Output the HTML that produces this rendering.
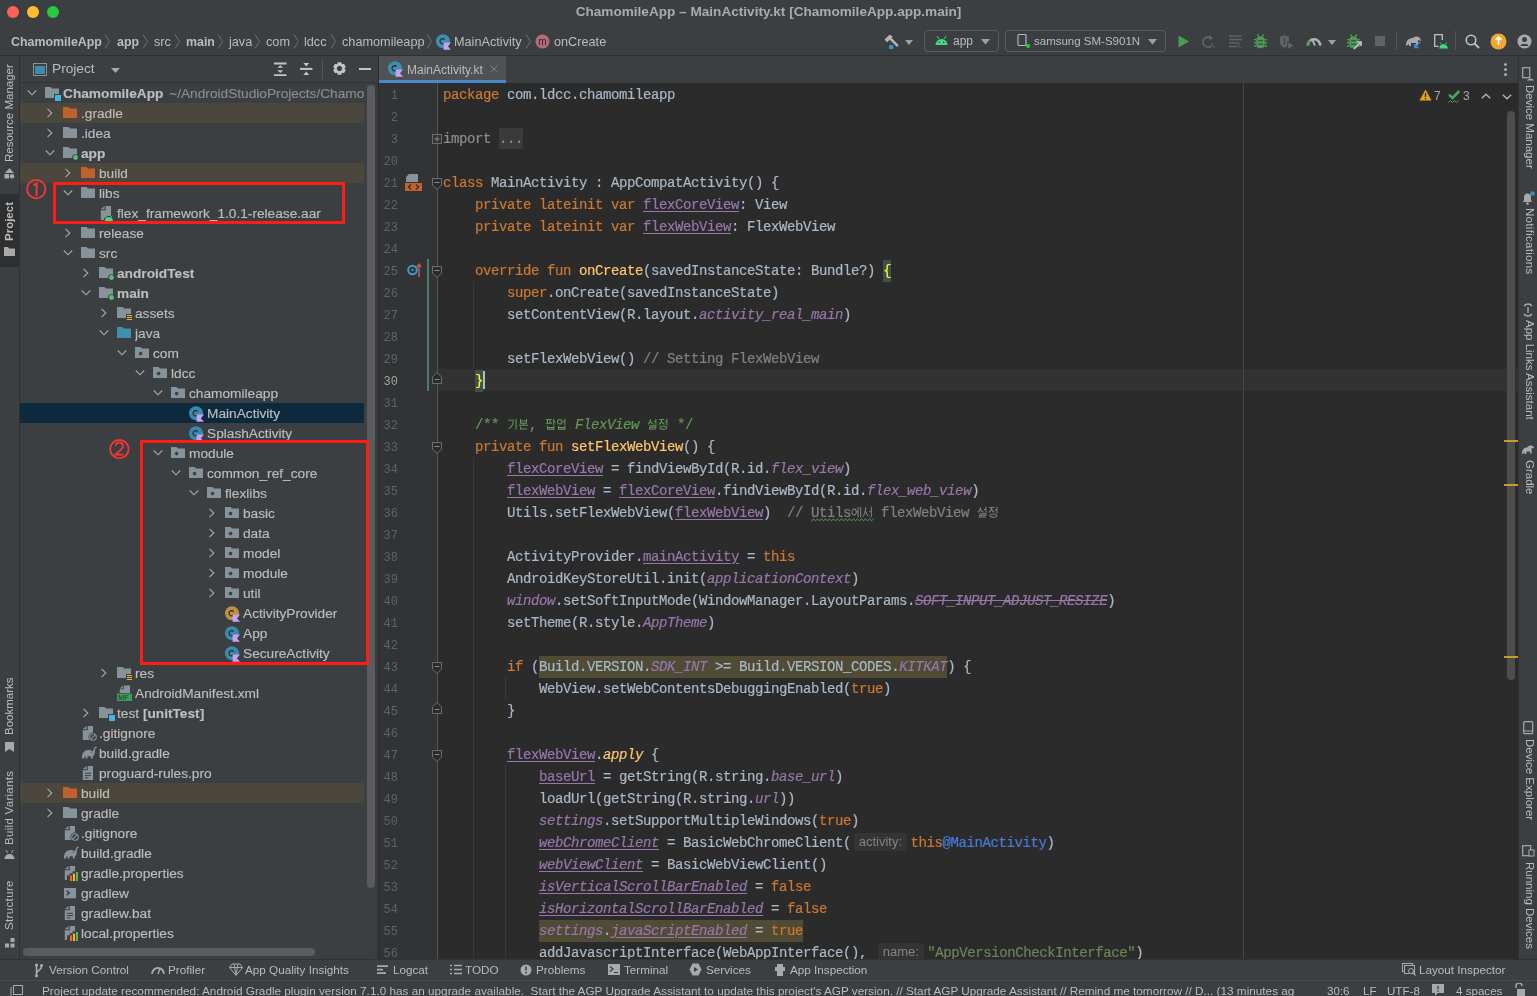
<!DOCTYPE html><html><head><meta charset='utf-8'><style>
*{margin:0;padding:0;box-sizing:border-box}
html,body{width:1537px;height:996px;overflow:hidden;background:#3c3f41;font-family:"Liberation Sans", sans-serif;}
.a{position:absolute}
.t{position:absolute;white-space:pre;line-height:1}
.ui{color:#bbbbbb;font-size:13px}
.row{position:absolute;left:20px;width:344px;height:20px}
.rt{position:absolute;top:3px;white-space:pre;overflow:hidden;max-width:301px;font-size:13.7px;color:#bdbdbd;line-height:17px;-webkit-text-stroke-width:0.15px}
.cl{position:absolute;left:443px;height:22px;white-space:pre;font-family:"Liberation Mono", monospace;font-size:14px;letter-spacing:-0.4px;-webkit-text-stroke-width:0.2px;line-height:22px;color:#a9b7c6}
.ln{position:absolute;left:378px;width:20px;text-align:right;font-family:"Liberation Mono", monospace;font-size:12px;line-height:22px;color:#606366;height:22px}
.k{color:#cc7832}
.f{color:#ffc66d}
.p{color:#9876aa}
.pu{color:#9876aa;text-decoration:underline;text-decoration-color:#9876aa;text-underline-offset:2px}
.i{font-style:italic}
.c{color:#808080}
.dc{color:#629755}
.s{color:#6a8759}
.lb{color:#467cda}
.hl{display:inline-block;height:22px;vertical-align:top;background:#4f4b35}
.hg{vertical-align:top;display:inline-block}
.ko{display:inline-block;width:10.8px;text-align:center;font-size:12.6px;letter-spacing:0;vertical-align:top;-webkit-text-stroke-width:0.1px}
.hint{display:inline-block;position:relative;top:1.3px;vertical-align:top;height:17.6px;font-family:"Liberation Sans", sans-serif;font-size:13px;-webkit-text-stroke-width:0;letter-spacing:0;color:#838383;background:#333435;border-radius:4px;padding:0 5px;line-height:18px;margin:0 3.4px 0 2.6px}
.vt{position:absolute;white-space:pre;font-size:11.5px;color:#bbbbbb;line-height:12px;transform-origin:0 0}
</style></head><body><div style='position:absolute;left:0;top:0;width:1537px;height:996px;will-change:transform'><div class='a' style='left:0;top:0;width:1537px;height:55px;background:#3c3f41'></div><div class='a' style='left:7px;top:6px;width:12px;height:12px;border-radius:6px;background:#fe5f57'></div><div class='a' style='left:27px;top:6px;width:12px;height:12px;border-radius:6px;background:#febc2e'></div><div class='a' style='left:47px;top:6px;width:12px;height:12px;border-radius:6px;background:#28c840'></div><div class='t' style='left:0;width:1537px;text-align:center;top:5px;font-size:13.6px;font-weight:bold;color:#ababab'>ChamomileApp – MainActivity.kt [ChamomileApp.app.main]</div><div class='a' style='left:0;top:55px;width:1537px;height:1px;background:#2e3031'></div><div class='t' style='left:11px;top:36px;font-size:12.4px;color:#bbbbbb;font-weight:bold;'>ChamomileApp</div><svg class='a' style='left:104px;top:34px' width='7' height='15'><path d='M1 0.5 L5.5 7.5 L1 14.5' stroke='#6e6e6e' stroke-width='1' fill='none'/></svg><div class='t' style='left:117px;top:36px;font-size:12.4px;color:#bbbbbb;font-weight:bold;'>app</div><svg class='a' style='left:142px;top:34px' width='7' height='15'><path d='M1 0.5 L5.5 7.5 L1 14.5' stroke='#6e6e6e' stroke-width='1' fill='none'/></svg><div class='t' style='left:154px;top:36px;font-size:12.7px;color:#bbbbbb;'>src</div><svg class='a' style='left:174px;top:34px' width='7' height='15'><path d='M1 0.5 L5.5 7.5 L1 14.5' stroke='#6e6e6e' stroke-width='1' fill='none'/></svg><div class='t' style='left:186px;top:36px;font-size:12.4px;color:#bbbbbb;font-weight:bold;'>main</div><svg class='a' style='left:217px;top:34px' width='7' height='15'><path d='M1 0.5 L5.5 7.5 L1 14.5' stroke='#6e6e6e' stroke-width='1' fill='none'/></svg><div class='t' style='left:229px;top:36px;font-size:12.7px;color:#bbbbbb;'>java</div><svg class='a' style='left:254px;top:34px' width='7' height='15'><path d='M1 0.5 L5.5 7.5 L1 14.5' stroke='#6e6e6e' stroke-width='1' fill='none'/></svg><div class='t' style='left:266px;top:36px;font-size:12.7px;color:#bbbbbb;'>com</div><svg class='a' style='left:293px;top:34px' width='7' height='15'><path d='M1 0.5 L5.5 7.5 L1 14.5' stroke='#6e6e6e' stroke-width='1' fill='none'/></svg><div class='t' style='left:304px;top:36px;font-size:12.7px;color:#bbbbbb;'>ldcc</div><svg class='a' style='left:330px;top:34px' width='7' height='15'><path d='M1 0.5 L5.5 7.5 L1 14.5' stroke='#6e6e6e' stroke-width='1' fill='none'/></svg><div class='t' style='left:342px;top:36px;font-size:12.7px;color:#bbbbbb;'>chamomileapp</div><svg class='a' style='left:426px;top:34px' width='7' height='15'><path d='M1 0.5 L5.5 7.5 L1 14.5' stroke='#6e6e6e' stroke-width='1' fill='none'/></svg><svg class='a' style='left:436px;top:34px' width='16' height='16' viewBox='0 0 16 16'><circle cx='7' cy='7.3' r='7' fill='#3d8eb0'/><path d='M8.6 5.6 A2.6 2.6 0 1 0 8.6 9' stroke='#2b2b2b' stroke-width='1.2' fill='none'/><path d='M7.6 8.6 H15 L11.9 12.2 L15 15.8 H7.6 Z' fill='#c7a0f5'/><path d='M7 8 V16' stroke='#3d8eb0' stroke-width='0'/></svg><div class='t' style='left:454px;top:36px;font-size:12.7px;color:#bbbbbb'>MainActivity</div><svg class='a' style='left:525px;top:34px' width='7' height='15'><path d='M1 0.5 L5.5 7.5 L1 14.5' stroke='#6e6e6e' stroke-width='1' fill='none'/></svg><svg class='a' style='left:535px;top:34px' width='15' height='15'><circle cx='7.5' cy='7.5' r='7' fill='#b46b79'/><text x='7.5' y='11' text-anchor='middle' font-family='Liberation Sans' font-size='10' fill='#2b2b2b'>m</text></svg><div class='t' style='left:554px;top:36px;font-size:12.7px;color:#bbbbbb'>onCreate</div><svg class='a' style='left:883px;top:34px' width='17' height='16' viewBox='0 0 17 16'><path d='M1.5 5.5 L6.5 0.8 L9.8 2.6 L8.6 3.9 L15.8 11.2 L14 13 L6.8 5.8 L4 8.2 Z' fill='#b4b4b4'/><rect x='5.6' y='10.5' width='5.2' height='5' fill='#3592c4' stroke='#2b2b2b' stroke-width='0.6'/></svg><svg class='a' style='left:905px;top:40px' width='9' height='5'><path d='M0 0 H8 L4 5 Z' fill='#a0a0a0'/></svg><div class='a' style='left:924px;top:30px;width:75px;height:22px;border:1px solid #5a5d5f;border-radius:4px'></div><svg class='a' style='left:935px;top:35px' width='13' height='11' viewBox='0 0 13 11'><path d='M0.5 10 A6 6 0 0 1 12.5 10 Z' fill='#3ddc84'/><path d='M2 1 L4 4 M11 1 L9 4' stroke='#3ddc84' stroke-width='1'/><circle cx='4.3' cy='7.3' r='0.8' fill='#3c3f41'/><circle cx='8.7' cy='7.3' r='0.8' fill='#3c3f41'/></svg><div class='t' style='left:953px;top:35px;font-size:12px;color:#bbbbbb'>app</div><svg class='a' style='left:981px;top:39px' width='9' height='6'><path d='M0 0 H9 L4.5 5.5 Z' fill='#a0a0a0'/></svg><div class='a' style='left:1005px;top:30px;width:161px;height:22px;border:1px solid #5a5d5f;border-radius:4px'></div><svg class='a' style='left:1017px;top:34px' width='14' height='15'><rect x='1' y='0.5' width='8' height='11' rx='1' stroke='#a9b7c6' stroke-width='1.2' fill='none'/><circle cx='11' cy='12' r='2' fill='#24d424'/></svg><div class='t' style='left:1034px;top:36px;font-size:11.5px;color:#bbbbbb'>samsung SM-S901N</div><svg class='a' style='left:1148px;top:39px' width='9' height='6'><path d='M0 0 H9 L4.5 5.5 Z' fill='#a0a0a0'/></svg><svg class='a' style='left:1178px;top:35px' width='12' height='13'><path d='M0.5 0.5 L11 6.5 L0.5 12.5 Z' fill='#499c54'/></svg><svg class='a' style='left:1201px;top:34px' width='15' height='15' viewBox='0 0 15 15'><path d='M11 5 A5 5 0 1 0 10 12' stroke='#5f6366' stroke-width='1.8' fill='none'/><path d='M8 1 L12 4 L8 6' fill='#5f6366'/><text x='9' y='14' font-size='7' font-family='Liberation Sans' fill='#5f6366'>A</text></svg><svg class='a' style='left:1229px;top:35px' width='15' height='13'><path d='M0 1H13M0 4.5H13M0 8H10M0 11.5H8' stroke='#5f6366' stroke-width='1.5'/><path d='M11 9 A2 2 0 1 0 13 12' stroke='#5f6366' stroke-width='1' fill='none'/></svg><svg class='a' style='left:1254px;top:34px' width='13' height='15' viewBox='0 0 13 15'><path d='M3.3 0.3 L5 2.6 M9.7 0.3 L8 2.6' stroke='#4e9a57' stroke-width='1.3'/><rect x='2.3' y='2.3' width='8.4' height='12' rx='4' fill='#4e9a57'/><path d='M0 5.6H2.5 M10.5 5.6H13 M0 8.8H2.5 M10.5 8.8H13 M0 12H2.5 M10.5 12H13' stroke='#4e9a57' stroke-width='1.4'/><path d='M4 6.8H9 M4 10.2H9' stroke='#3c3f41' stroke-width='1.1'/></svg><svg class='a' style='left:1279px;top:35px' width='16' height='15'><path d='M0.8 1.8 L5.5 0.3 L10 1.8 V6.5 C10 9.8 7.8 11.8 5.5 12.8 C3 11.8 0.8 9.8 0.8 6.5 Z' fill='#5f6366'/><path d='M5.5 3 V10' stroke='#3c3f41' stroke-width='1.2'/><path d='M8.6 6.8 L15.4 10.6 L8.6 14.4 Z' fill='#5f6366' stroke='#3c3f41' stroke-width='0.8'/></svg><svg class='a' style='left:1306px;top:35px' width='16' height='11'><path d='M1.8 10.5 A6.2 6.2 0 0 1 14.2 10.5' stroke='#b4b4b4' stroke-width='2.6' fill='none'/><path d='M1.8 10.5 A6.2 6.2 0 0 1 4 5.6' stroke='#4e9a57' stroke-width='2.6' fill='none'/><path d='M9 10.5 L6.2 4.5' stroke='#b4b4b4' stroke-width='1.8'/></svg><svg class='a' style='left:1328px;top:40px' width='9' height='5'><path d='M0 0 H8 L4 5 Z' fill='#a0a0a0'/></svg><svg class='a' style='left:1347px;top:34px' width='13' height='15' viewBox='0 0 13 15'><path d='M3.3 0.3 L5 2.6 M9.7 0.3 L8 2.6' stroke='#4e9a57' stroke-width='1.3'/><rect x='2.3' y='2.3' width='8.4' height='12' rx='4' fill='#4e9a57'/><path d='M0 5.6H2.5 M10.5 5.6H13 M0 8.8H2.5 M10.5 8.8H13 M0 12H2.5 M10.5 12H13' stroke='#4e9a57' stroke-width='1.4'/><path d='M4 6.8H9 M4 10.2H9' stroke='#3c3f41' stroke-width='1.1'/></svg><svg class='a' style='left:1353px;top:40px' width='10' height='10'><path d='M1 9 L8 2 M4 2 H8 V6' stroke='#c9c9c9' stroke-width='1.6' fill='none'/></svg><div class='a' style='left:1375px;top:36px;width:10px;height:10px;background:#5f6366'></div><div class='a' style='left:1396px;top:31px;width:1px;height:19px;background:#555'></div><svg class='a' style='left:1405px;top:34px' width='17' height='15' viewBox='0 0 17 15'><path d='M1 12 C1 6 4 4 8 4 C10 2 13 2 15 4 L16 7 L13 6 L13 12 L11 12 L11 9 L6 9 L6 12 L4 12 L4 10 Z' fill='#a9a9a9'/><path d='M15 8 L10 13 M10 10 V13.5 H13.5' stroke='#3d8fd1' stroke-width='1.6' fill='none'/></svg><svg class='a' style='left:1434px;top:34px' width='14' height='15'><path d='M8.3 6 V0.7 H0.7 V12.3 H4.5' stroke='#c0c0c0' stroke-width='1.3' fill='none'/><path d='M5.2 14.5 A4.3 4.3 0 0 1 13.8 14.5 Z' fill='#3ddc84'/><path d='M6.3 8.6 L7.3 10.3 M12.7 8.6 L11.7 10.3' stroke='#3ddc84' stroke-width='0.9'/></svg><div class='a' style='left:1455px;top:31px;width:1px;height:19px;background:#555'></div><svg class='a' style='left:1465px;top:34px' width='15' height='15'><circle cx='6' cy='6' r='4.8' stroke='#c0c0c0' stroke-width='1.6' fill='none'/><path d='M9.5 9.5 L14 14' stroke='#c0c0c0' stroke-width='1.8'/></svg><svg class='a' style='left:1490px;top:33px' width='17' height='17'><circle cx='8.5' cy='8.5' r='8' fill='#f0a732'/><path d='M8.5 4 V12 M5.5 7 L8.5 4 L11.5 7' stroke='#fff' stroke-width='1.6' fill='none'/></svg><svg class='a' style='left:1517px;top:34px' width='15' height='15'><circle cx='7.5' cy='7.5' r='7' fill='#a9a9a9'/><circle cx='7.5' cy='5.5' r='2.5' fill='#3c3f41'/><path d='M3 12 A5 4 0 0 1 12 12' fill='#3c3f41'/></svg><div class='a' style='left:0;top:56px;width:19px;height:903px;background:#3c3f41'></div><div class='a' style='left:19px;top:56px;width:1px;height:903px;background:#323232'></div><div class='a' style='left:0;top:194px;width:19px;height:73px;background:#2d2f31'></div><div class='vt' style='left:3px;top:162px;transform:rotate(-90deg);font-size:11.5px;letter-spacing:0px;'>Resource Manager</div><svg class='a' style='left:4px;top:168px' width='11' height='11'><path d='M5.5 0 L10 5 H1 Z' fill='#a9a9a9'/><rect x='0.5' y='6' width='4.5' height='4.5' fill='#a9a9a9'/><circle cx='8' cy='8.3' r='2.3' fill='#a9a9a9'/></svg><div class='vt' style='left:3px;top:241px;transform:rotate(-90deg);font-size:11.5px;letter-spacing:0px;font-weight:bold;'>Project</div><svg class='a' style='left:4px;top:247px' width='11' height='9'><path d='M0 0 H4 L5 1.5 H11 V9 H0 Z' fill='#a9a9a9'/></svg><div class='vt' style='left:3px;top:735px;transform:rotate(-90deg);font-size:11.5px;letter-spacing:0px;'>Bookmarks</div><svg class='a' style='left:5px;top:742px' width='9' height='11'><path d='M0 0 H9 V10 L4.5 7 L0 10 Z' fill='#a9a9a9'/></svg><div class='vt' style='left:3px;top:845px;transform:rotate(-90deg);font-size:11.5px;letter-spacing:0.3px;'>Build Variants</div><svg class='a' style='left:4px;top:850px' width='11' height='9'><path d='M0.5 9 A5 5 0 0 1 10.5 9 Z' fill='#a9a9a9'/><path d='M2 0 L3.5 3 M9 0 L7.5 3' stroke='#a9a9a9'/></svg><div class='vt' style='left:3px;top:930px;transform:rotate(-90deg);font-size:11.5px;letter-spacing:0.35px;'>Structure</div><svg class='a' style='left:5px;top:938px' width='10' height='10'><rect x='5.5' y='0' width='4' height='4' fill='#a9a9a9'/><rect x='0' y='5.5' width='4' height='4' fill='#a9a9a9'/><rect x='5.5' y='5.5' width='4' height='4' fill='#a9a9a9'/></svg><div class='a' style='left:20px;top:56px;width:358px;height:903px;background:#3c3f41'></div><div class='a' style='left:20px;top:82px;width:358px;height:1px;background:#323232'></div><svg class='a' style='left:33px;top:63px' width='14' height='13'><rect x='0.5' y='0.5' width='13' height='12' fill='none' stroke='#8c9397'/><rect x='2' y='3' width='10' height='8' fill='#3f8bab'/></svg><div class='t' style='left:52px;top:62px;font-size:13.7px;color:#bbbbbb'>Project</div><svg class='a' style='left:111px;top:68px' width='9' height='5'><path d='M0 0 H9 L4.5 5 Z' fill='#a9a9a9'/></svg><svg class='a' style='left:274px;top:62px' width='13' height='14'><path d='M0 1.4H12.5 M0 13.3H12.5' stroke='#c4c4c4' stroke-width='2'/><path d='M6.25 3.3 L9.2 5.8 H3.3 Z M6.25 10.9 L9.2 8.2 H3.3 Z' fill='#c4c4c4'/></svg><svg class='a' style='left:300px;top:62px' width='13' height='14'><path d='M0 6.9H12.5' stroke='#c4c4c4' stroke-width='2'/><path d='M6.25 4.4 L9.2 1 H3.3 Z M6.25 9.6 L9.2 13 H3.3 Z' fill='#c4c4c4'/></svg><div class='a' style='left:322px;top:59px;width:1px;height:20px;background:#555'></div><svg class='a' style='left:332.5px;top:62.3px' width='13' height='13'><path fill-rule='evenodd' d='M4.15 2.20 L4.70 0.25 L8.30 0.25 L8.85 2.20 L9.05 2.32 L11.01 1.82 L12.81 4.93 L11.40 6.38 L11.40 6.62 L12.81 8.07 L11.01 11.18 L9.05 10.68 L8.85 10.80 L8.30 12.75 L4.70 12.75 L4.15 10.80 L3.95 10.68 L1.99 11.18 L0.19 8.07 L1.60 6.62 L1.60 6.38 L0.19 4.93 L1.99 1.82 L3.95 2.32 Z M9.2 6.5 A2.7 2.7 0 1 0 9.2 6.51 Z' fill='#c4c4c4'/></svg><div class='a' style='left:359px;top:68px;width:12px;height:2px;background:#c4c4c4'></div><svg class='a' style='left:27px;top:88px' width='10' height='10'><path d='M0.8 2.5 L5 6.8 L9.2 2.5' stroke='#a9a9a9' stroke-width='1.1' fill='none'/></svg><svg class='a' style='left:45px;top:85px' width='16' height='16' viewBox='0 0 16 16'><path d='M0 2 H5.5 L7 3.5 H14 V13 H0 Z' fill='#87939a'/><rect x='9' y='9' width='7' height='7' fill='#3c3f41'/><rect x='10' y='10' width='6' height='6' fill='#40b6e0'/></svg><div class='rt' style='left:63px;top:85.3px'><b>ChamomileApp</b><span style='color:#8c8c8c;margin-left:2px'> ~/AndroidStudioProjects/Chamo</span></div><div class='a' style='left:20px;top:103px;width:344px;height:20px;background:#4b473c'></div><svg class='a' style='left:45px;top:108px' width='10' height='10'><path d='M2.5 0.8 L6.8 5 L2.5 9.2' stroke='#a9a9a9' stroke-width='1.1' fill='none'/></svg><svg class='a' style='left:63px;top:105px' width='16' height='16' viewBox='0 0 16 16'><path d='M0 2 H5.5 L7 3.5 H14 V13 H0 Z' fill='#c0622d'/></svg><div class='rt' style='left:81px;top:105.3px'>.gradle</div><svg class='a' style='left:45px;top:128px' width='10' height='10'><path d='M2.5 0.8 L6.8 5 L2.5 9.2' stroke='#a9a9a9' stroke-width='1.1' fill='none'/></svg><svg class='a' style='left:63px;top:125px' width='16' height='16' viewBox='0 0 16 16'><path d='M0 2 H5.5 L7 3.5 H14 V13 H0 Z' fill='#87939a'/></svg><div class='rt' style='left:81px;top:125.3px'>.idea</div><svg class='a' style='left:45px;top:148px' width='10' height='10'><path d='M0.8 2.5 L5 6.8 L9.2 2.5' stroke='#a9a9a9' stroke-width='1.1' fill='none'/></svg><svg class='a' style='left:63px;top:145px' width='16' height='16' viewBox='0 0 16 16'><path d='M0 2 H5.5 L7 3.5 H14 V13 H0 Z' fill='#87939a'/><circle cx='12.5' cy='12.5' r='3.3' fill='#3c3f41'/><circle cx='12.5' cy='12.5' r='2.4' fill='#59c36a'/></svg><div class='rt' style='left:81px;top:145.3px'><b>app</b></div><div class='a' style='left:20px;top:163px;width:344px;height:20px;background:#4b473c'></div><svg class='a' style='left:63px;top:168px' width='10' height='10'><path d='M2.5 0.8 L6.8 5 L2.5 9.2' stroke='#a9a9a9' stroke-width='1.1' fill='none'/></svg><svg class='a' style='left:81px;top:165px' width='16' height='16' viewBox='0 0 16 16'><path d='M0 2 H5.5 L7 3.5 H14 V13 H0 Z' fill='#c0622d'/></svg><div class='rt' style='left:99px;top:165.3px'>build</div><svg class='a' style='left:63px;top:188px' width='10' height='10'><path d='M0.8 2.5 L5 6.8 L9.2 2.5' stroke='#a9a9a9' stroke-width='1.1' fill='none'/></svg><svg class='a' style='left:81px;top:185px' width='16' height='16' viewBox='0 0 16 16'><path d='M0 2 H5.5 L7 3.5 H14 V13 H0 Z' fill='#87939a'/></svg><div class='rt' style='left:99px;top:185.3px'>libs</div><svg class='a' style='left:99px;top:205px' width='16' height='16' viewBox='0 0 16 16'><path d='M6.8 1 H12 V15 H1.8 V5.3 H6.8 Z' fill='#87939a'/><path d='M1.8 4.2 L5.6 1 V4.2 Z' fill='#87939a'/><path d='M4.6 16 A5.2 5.2 0 0 1 15 16 Z' fill='#3c3f41'/><path d='M5.8 16 A4 4 0 0 1 13.8 16 Z' fill='#3ddc84'/><path d='M6.6 10.8 L7.8 12.4 M13 10.8 L11.8 12.4' stroke='#3ddc84' stroke-width='0.9'/></svg><div class='rt' style='left:117px;top:205.3px'>flex_framework_1.0.1-release.aar</div><svg class='a' style='left:63px;top:228px' width='10' height='10'><path d='M2.5 0.8 L6.8 5 L2.5 9.2' stroke='#a9a9a9' stroke-width='1.1' fill='none'/></svg><svg class='a' style='left:81px;top:225px' width='16' height='16' viewBox='0 0 16 16'><path d='M0 2 H5.5 L7 3.5 H14 V13 H0 Z' fill='#87939a'/></svg><div class='rt' style='left:99px;top:225.3px'>release</div><svg class='a' style='left:63px;top:248px' width='10' height='10'><path d='M0.8 2.5 L5 6.8 L9.2 2.5' stroke='#a9a9a9' stroke-width='1.1' fill='none'/></svg><svg class='a' style='left:81px;top:245px' width='16' height='16' viewBox='0 0 16 16'><path d='M0 2 H5.5 L7 3.5 H14 V13 H0 Z' fill='#87939a'/></svg><div class='rt' style='left:99px;top:245.3px'>src</div><svg class='a' style='left:81px;top:268px' width='10' height='10'><path d='M2.5 0.8 L6.8 5 L2.5 9.2' stroke='#a9a9a9' stroke-width='1.1' fill='none'/></svg><svg class='a' style='left:99px;top:265px' width='16' height='16' viewBox='0 0 16 16'><path d='M0 2 H5.5 L7 3.5 H14 V13 H0 Z' fill='#87939a'/><circle cx='12.5' cy='12.5' r='3.3' fill='#3c3f41'/><circle cx='12.5' cy='12.5' r='2.4' fill='#59c36a'/></svg><div class='rt' style='left:117px;top:265.3px'><b>androidTest</b></div><svg class='a' style='left:81px;top:288px' width='10' height='10'><path d='M0.8 2.5 L5 6.8 L9.2 2.5' stroke='#a9a9a9' stroke-width='1.1' fill='none'/></svg><svg class='a' style='left:99px;top:285px' width='16' height='16' viewBox='0 0 16 16'><path d='M0 2 H5.5 L7 3.5 H14 V13 H0 Z' fill='#87939a'/><circle cx='12.5' cy='12.5' r='3.3' fill='#3c3f41'/><circle cx='12.5' cy='12.5' r='2.4' fill='#59c36a'/></svg><div class='rt' style='left:117px;top:285.3px'><b>main</b></div><svg class='a' style='left:99px;top:308px' width='10' height='10'><path d='M2.5 0.8 L6.8 5 L2.5 9.2' stroke='#a9a9a9' stroke-width='1.1' fill='none'/></svg><svg class='a' style='left:117px;top:305px' width='16' height='16' viewBox='0 0 16 16'><path d='M0 2 H5.5 L7 3.5 H14 V13 H0 Z' fill='#87939a'/><rect x='9' y='9' width='7' height='7' fill='#3c3f41'/><path d='M10 10.5H15 M10 12.5H15 M10 14.5H15' stroke='#f4af3d' stroke-width='1.2'/></svg><div class='rt' style='left:135px;top:305.3px'>assets</div><svg class='a' style='left:99px;top:328px' width='10' height='10'><path d='M0.8 2.5 L5 6.8 L9.2 2.5' stroke='#a9a9a9' stroke-width='1.1' fill='none'/></svg><svg class='a' style='left:117px;top:325px' width='16' height='16' viewBox='0 0 16 16'><path d='M0 2 H5.5 L7 3.5 H14 V13 H0 Z' fill='#3e8fb0'/></svg><div class='rt' style='left:135px;top:325.3px'>java</div><svg class='a' style='left:117px;top:348px' width='10' height='10'><path d='M0.8 2.5 L5 6.8 L9.2 2.5' stroke='#a9a9a9' stroke-width='1.1' fill='none'/></svg><svg class='a' style='left:135px;top:345px' width='16' height='16' viewBox='0 0 16 16'><path d='M0 2 H5.5 L7 3.5 H14 V13 H0 Z' fill='#87939a'/><circle cx='5.6' cy='8.6' r='1.8' fill='#3c3f41'/></svg><div class='rt' style='left:153px;top:345.3px'>com</div><svg class='a' style='left:135px;top:368px' width='10' height='10'><path d='M0.8 2.5 L5 6.8 L9.2 2.5' stroke='#a9a9a9' stroke-width='1.1' fill='none'/></svg><svg class='a' style='left:153px;top:365px' width='16' height='16' viewBox='0 0 16 16'><path d='M0 2 H5.5 L7 3.5 H14 V13 H0 Z' fill='#87939a'/><circle cx='5.6' cy='8.6' r='1.8' fill='#3c3f41'/></svg><div class='rt' style='left:171px;top:365.3px'>ldcc</div><svg class='a' style='left:153px;top:388px' width='10' height='10'><path d='M0.8 2.5 L5 6.8 L9.2 2.5' stroke='#a9a9a9' stroke-width='1.1' fill='none'/></svg><svg class='a' style='left:171px;top:385px' width='16' height='16' viewBox='0 0 16 16'><path d='M0 2 H5.5 L7 3.5 H14 V13 H0 Z' fill='#87939a'/><circle cx='5.6' cy='8.6' r='1.8' fill='#3c3f41'/></svg><div class='rt' style='left:189px;top:385.3px'>chamomileapp</div><div class='a' style='left:20px;top:403px;width:344px;height:20px;background:#0d293e'></div><svg class='a' style='left:189px;top:406px' width='16' height='16' viewBox='0 0 16 16'><circle cx='7' cy='7.3' r='7' fill='#3a8bab'/><path d='M8.6 5.6 A2.6 2.6 0 1 0 8.6 9' stroke='#2b2b2b' stroke-width='1.2' fill='none'/><path d='M7.6 8.6 H15 L11.9 12.2 L15 15.8 H7.6 Z' fill='#c7a0f5'/><path d='M7 8 V16' stroke='#3a8bab' stroke-width='0'/></svg><div class='rt' style='left:207px;top:405.3px'>MainActivity</div><svg class='a' style='left:189px;top:426px' width='16' height='16' viewBox='0 0 16 16'><circle cx='7' cy='7.3' r='7' fill='#3a8bab'/><path d='M8.6 5.6 A2.6 2.6 0 1 0 8.6 9' stroke='#2b2b2b' stroke-width='1.2' fill='none'/><path d='M7.6 8.6 H15 L11.9 12.2 L15 15.8 H7.6 Z' fill='#c7a0f5'/><path d='M7 8 V16' stroke='#3a8bab' stroke-width='0'/></svg><div class='rt' style='left:207px;top:425.3px'>SplashActivity</div><svg class='a' style='left:153px;top:448px' width='10' height='10'><path d='M0.8 2.5 L5 6.8 L9.2 2.5' stroke='#a9a9a9' stroke-width='1.1' fill='none'/></svg><svg class='a' style='left:171px;top:445px' width='16' height='16' viewBox='0 0 16 16'><path d='M0 2 H5.5 L7 3.5 H14 V13 H0 Z' fill='#87939a'/><circle cx='5.6' cy='8.6' r='1.8' fill='#3c3f41'/></svg><div class='rt' style='left:189px;top:445.3px'>module</div><svg class='a' style='left:171px;top:468px' width='10' height='10'><path d='M0.8 2.5 L5 6.8 L9.2 2.5' stroke='#a9a9a9' stroke-width='1.1' fill='none'/></svg><svg class='a' style='left:189px;top:465px' width='16' height='16' viewBox='0 0 16 16'><path d='M0 2 H5.5 L7 3.5 H14 V13 H0 Z' fill='#87939a'/><circle cx='5.6' cy='8.6' r='1.8' fill='#3c3f41'/></svg><div class='rt' style='left:207px;top:465.3px'>common_ref_core</div><svg class='a' style='left:189px;top:488px' width='10' height='10'><path d='M0.8 2.5 L5 6.8 L9.2 2.5' stroke='#a9a9a9' stroke-width='1.1' fill='none'/></svg><svg class='a' style='left:207px;top:485px' width='16' height='16' viewBox='0 0 16 16'><path d='M0 2 H5.5 L7 3.5 H14 V13 H0 Z' fill='#87939a'/><circle cx='5.6' cy='8.6' r='1.8' fill='#3c3f41'/></svg><div class='rt' style='left:225px;top:485.3px'>flexlibs</div><svg class='a' style='left:207px;top:508px' width='10' height='10'><path d='M2.5 0.8 L6.8 5 L2.5 9.2' stroke='#a9a9a9' stroke-width='1.1' fill='none'/></svg><svg class='a' style='left:225px;top:505px' width='16' height='16' viewBox='0 0 16 16'><path d='M0 2 H5.5 L7 3.5 H14 V13 H0 Z' fill='#87939a'/><circle cx='5.6' cy='8.6' r='1.8' fill='#3c3f41'/></svg><div class='rt' style='left:243px;top:505.3px'>basic</div><svg class='a' style='left:207px;top:528px' width='10' height='10'><path d='M2.5 0.8 L6.8 5 L2.5 9.2' stroke='#a9a9a9' stroke-width='1.1' fill='none'/></svg><svg class='a' style='left:225px;top:525px' width='16' height='16' viewBox='0 0 16 16'><path d='M0 2 H5.5 L7 3.5 H14 V13 H0 Z' fill='#87939a'/><circle cx='5.6' cy='8.6' r='1.8' fill='#3c3f41'/></svg><div class='rt' style='left:243px;top:525.3px'>data</div><svg class='a' style='left:207px;top:548px' width='10' height='10'><path d='M2.5 0.8 L6.8 5 L2.5 9.2' stroke='#a9a9a9' stroke-width='1.1' fill='none'/></svg><svg class='a' style='left:225px;top:545px' width='16' height='16' viewBox='0 0 16 16'><path d='M0 2 H5.5 L7 3.5 H14 V13 H0 Z' fill='#87939a'/><circle cx='5.6' cy='8.6' r='1.8' fill='#3c3f41'/></svg><div class='rt' style='left:243px;top:545.3px'>model</div><svg class='a' style='left:207px;top:568px' width='10' height='10'><path d='M2.5 0.8 L6.8 5 L2.5 9.2' stroke='#a9a9a9' stroke-width='1.1' fill='none'/></svg><svg class='a' style='left:225px;top:565px' width='16' height='16' viewBox='0 0 16 16'><path d='M0 2 H5.5 L7 3.5 H14 V13 H0 Z' fill='#87939a'/><circle cx='5.6' cy='8.6' r='1.8' fill='#3c3f41'/></svg><div class='rt' style='left:243px;top:565.3px'>module</div><svg class='a' style='left:207px;top:588px' width='10' height='10'><path d='M2.5 0.8 L6.8 5 L2.5 9.2' stroke='#a9a9a9' stroke-width='1.1' fill='none'/></svg><svg class='a' style='left:225px;top:585px' width='16' height='16' viewBox='0 0 16 16'><path d='M0 2 H5.5 L7 3.5 H14 V13 H0 Z' fill='#87939a'/><circle cx='5.6' cy='8.6' r='1.8' fill='#3c3f41'/></svg><div class='rt' style='left:243px;top:585.3px'>util</div><svg class='a' style='left:225px;top:606px' width='16' height='16' viewBox='0 0 16 16'><circle cx='7' cy='7.3' r='7' fill='#c0903f'/><path d='M8.6 5.6 A2.6 2.6 0 1 0 8.6 9' stroke='#2b2b2b' stroke-width='1.2' fill='none'/><path d='M7.6 8.6 H15 L11.9 12.2 L15 15.8 H7.6 Z' fill='#c7a0f5'/><path d='M7 8 V16' stroke='#c0903f' stroke-width='0'/></svg><div class='rt' style='left:243px;top:605.3px'>ActivityProvider</div><svg class='a' style='left:225px;top:626px' width='16' height='16' viewBox='0 0 16 16'><circle cx='7' cy='7.3' r='7' fill='#3a8bab'/><path d='M8.6 5.6 A2.6 2.6 0 1 0 8.6 9' stroke='#2b2b2b' stroke-width='1.2' fill='none'/><path d='M7.6 8.6 H15 L11.9 12.2 L15 15.8 H7.6 Z' fill='#c7a0f5'/><path d='M7 8 V16' stroke='#3a8bab' stroke-width='0'/></svg><div class='rt' style='left:243px;top:625.3px'>App</div><svg class='a' style='left:225px;top:646px' width='16' height='16' viewBox='0 0 16 16'><circle cx='7' cy='7.3' r='7' fill='#3a8bab'/><path d='M8.6 5.6 A2.6 2.6 0 1 0 8.6 9' stroke='#2b2b2b' stroke-width='1.2' fill='none'/><path d='M7.6 8.6 H15 L11.9 12.2 L15 15.8 H7.6 Z' fill='#c7a0f5'/><path d='M7 8 V16' stroke='#3a8bab' stroke-width='0'/></svg><div class='rt' style='left:243px;top:645.3px'>SecureActivity</div><svg class='a' style='left:99px;top:668px' width='10' height='10'><path d='M2.5 0.8 L6.8 5 L2.5 9.2' stroke='#a9a9a9' stroke-width='1.1' fill='none'/></svg><svg class='a' style='left:117px;top:665px' width='16' height='16' viewBox='0 0 16 16'><path d='M0 2 H5.5 L7 3.5 H14 V13 H0 Z' fill='#87939a'/><rect x='9' y='9' width='7' height='7' fill='#3c3f41'/><path d='M10 10.5H15 M10 12.5H15 M10 14.5H15' stroke='#f4af3d' stroke-width='1.2'/></svg><div class='rt' style='left:135px;top:665.3px'>res</div><svg class='a' style='left:117px;top:685px' width='16' height='16' viewBox='0 0 16 16'><path d='M6.8 0.5 H13 V8 H2.8 V4.3 H6.8 Z' fill='#87939a'/><path d='M2.8 3.4 L5.8 0.5 V3.4 Z' fill='#87939a'/><rect x='0' y='8.6' width='15' height='7.4' fill='#3c9c5a'/><text x='1.3' y='15.2' font-family='Liberation Sans' font-size='7' fill='#27302a'>MF</text></svg><div class='rt' style='left:135px;top:685.3px'>AndroidManifest.xml</div><svg class='a' style='left:81px;top:708px' width='10' height='10'><path d='M2.5 0.8 L6.8 5 L2.5 9.2' stroke='#a9a9a9' stroke-width='1.1' fill='none'/></svg><svg class='a' style='left:99px;top:705px' width='16' height='16' viewBox='0 0 16 16'><path d='M0 2 H5.5 L7 3.5 H14 V13 H0 Z' fill='#87939a'/><rect x='9' y='9' width='7' height='7' fill='#3c3f41'/><rect x='10' y='10' width='6' height='6' fill='#40b6e0'/></svg><div class='rt' style='left:117px;top:705.3px'>test <b>[unitTest]</b></div><svg class='a' style='left:81px;top:725px' width='16' height='16' viewBox='0 0 16 16'><path d='M6.8 1 H12 V15 H1.8 V5.3 H6.8 Z' fill='#87939a'/><path d='M1.8 4.2 L5.6 1 V4.2 Z' fill='#87939a'/><circle cx='12' cy='12' r='4.6' fill='#3c3f41'/><circle cx='12' cy='12' r='3.3' stroke='#87939a' stroke-width='1.1' fill='none'/><path d='M9.8 14.2 L14.2 9.8' stroke='#87939a' stroke-width='1.1'/></svg><div class='rt' style='left:99px;top:725.3px'>.gitignore</div><svg class='a' style='left:81px;top:745px' width='16' height='16' viewBox='0 0 16 16'><path d='M1 13.5 C0.6 9 3 5 7.5 5 C9.5 5 11 5.6 12 6.6 C12.4 4.6 13.2 2.2 14.6 1.6 C15.6 1.3 16.2 2.2 15.6 3.2 L15 2.6 C14.2 3.2 14 5.8 13.7 8.3 C13.5 9.8 12.8 10.8 11.8 11 V13.5 H9.8 V11.3 H6.6 V13.5 H4.6 V11.3 C3.6 11.4 3 12.4 2.8 13.5 Z' fill='#87939a'/><circle cx='10.2' cy='7.3' r='0.6' fill='#3c3f41'/></svg><div class='rt' style='left:99px;top:745.3px'>build.gradle</div><svg class='a' style='left:81px;top:765px' width='16' height='16' viewBox='0 0 16 16'><path d='M6.8 1 H12 V15 H1.8 V5.3 H6.8 Z' fill='#87939a'/><path d='M1.8 4.2 L5.6 1 V4.2 Z' fill='#87939a'/><path d='M3.8 8.3H10M3.8 10.6H10M3.8 12.9H7.5' stroke='#3c3f41' stroke-width='1'/></svg><div class='rt' style='left:99px;top:765.3px'>proguard-rules.pro</div><div class='a' style='left:20px;top:783px;width:344px;height:20px;background:#4b473c'></div><svg class='a' style='left:45px;top:788px' width='10' height='10'><path d='M2.5 0.8 L6.8 5 L2.5 9.2' stroke='#a9a9a9' stroke-width='1.1' fill='none'/></svg><svg class='a' style='left:63px;top:785px' width='16' height='16' viewBox='0 0 16 16'><path d='M0 2 H5.5 L7 3.5 H14 V13 H0 Z' fill='#c0622d'/></svg><div class='rt' style='left:81px;top:785.3px'>build</div><svg class='a' style='left:45px;top:808px' width='10' height='10'><path d='M2.5 0.8 L6.8 5 L2.5 9.2' stroke='#a9a9a9' stroke-width='1.1' fill='none'/></svg><svg class='a' style='left:63px;top:805px' width='16' height='16' viewBox='0 0 16 16'><path d='M0 2 H5.5 L7 3.5 H14 V13 H0 Z' fill='#87939a'/></svg><div class='rt' style='left:81px;top:805.3px'>gradle</div><svg class='a' style='left:63px;top:825px' width='16' height='16' viewBox='0 0 16 16'><path d='M6.8 1 H12 V15 H1.8 V5.3 H6.8 Z' fill='#87939a'/><path d='M1.8 4.2 L5.6 1 V4.2 Z' fill='#87939a'/><circle cx='12' cy='12' r='4.6' fill='#3c3f41'/><circle cx='12' cy='12' r='3.3' stroke='#87939a' stroke-width='1.1' fill='none'/><path d='M9.8 14.2 L14.2 9.8' stroke='#87939a' stroke-width='1.1'/></svg><div class='rt' style='left:81px;top:825.3px'>.gitignore</div><svg class='a' style='left:63px;top:845px' width='16' height='16' viewBox='0 0 16 16'><path d='M1 13.5 C0.6 9 3 5 7.5 5 C9.5 5 11 5.6 12 6.6 C12.4 4.6 13.2 2.2 14.6 1.6 C15.6 1.3 16.2 2.2 15.6 3.2 L15 2.6 C14.2 3.2 14 5.8 13.7 8.3 C13.5 9.8 12.8 10.8 11.8 11 V13.5 H9.8 V11.3 H6.6 V13.5 H4.6 V11.3 C3.6 11.4 3 12.4 2.8 13.5 Z' fill='#87939a'/><circle cx='10.2' cy='7.3' r='0.6' fill='#3c3f41'/></svg><div class='rt' style='left:81px;top:845.3px'>build.gradle</div><svg class='a' style='left:63px;top:865px' width='16' height='16' viewBox='0 0 16 16'><path d='M6.8 1 H12 V6.3 H9.6 V8.2 H6.7 V10.2 H4 V15 H1.8 V5.3 H6.8 Z' fill='#87939a'/><path d='M1.8 4.2 L5.6 1 V4.2 Z' fill='#87939a'/><rect x='6.9' y='10.4' width='2.1' height='5.6' fill='#f26522'/><rect x='9.9' y='8.6' width='2.1' height='7.4' fill='#f4af3d'/><rect x='12.9' y='7' width='2.1' height='9' fill='#62b543'/></svg><div class='rt' style='left:81px;top:865.3px'>gradle.properties</div><svg class='a' style='left:63px;top:885px' width='16' height='16' viewBox='0 0 16 16'><rect x='1' y='3' width='12' height='10.3' fill='#87939a'/><path d='M3.6 5.9 L6.3 8.1 L3.6 10.3' stroke='#3c3f41' stroke-width='1.4' fill='none'/></svg><div class='rt' style='left:81px;top:885.3px'>gradlew</div><svg class='a' style='left:63px;top:905px' width='16' height='16' viewBox='0 0 16 16'><path d='M6.8 1 H12 V15 H1.8 V5.3 H6.8 Z' fill='#87939a'/><path d='M1.8 4.2 L5.6 1 V4.2 Z' fill='#87939a'/><path d='M3.8 8.3H10M3.8 10.6H10M3.8 12.9H7.5' stroke='#3c3f41' stroke-width='1'/></svg><div class='rt' style='left:81px;top:905.3px'>gradlew.bat</div><svg class='a' style='left:63px;top:925px' width='16' height='16' viewBox='0 0 16 16'><path d='M6.8 1 H12 V6.3 H9.6 V8.2 H6.7 V10.2 H4 V15 H1.8 V5.3 H6.8 Z' fill='#87939a'/><path d='M1.8 4.2 L5.6 1 V4.2 Z' fill='#87939a'/><rect x='6.9' y='10.4' width='2.1' height='5.6' fill='#f26522'/><rect x='9.9' y='8.6' width='2.1' height='7.4' fill='#f4af3d'/><rect x='12.9' y='7' width='2.1' height='9' fill='#62b543'/></svg><div class='rt' style='left:81px;top:925.3px'>local.properties</div><div class='a' style='left:367px;top:85px;width:8px;height:803px;border-radius:4px;background:#595b5d'></div><div class='a' style='left:375px;top:83px;width:3px;height:876px;background:#393b3d'></div><div class='a' style='left:23px;top:948px;width:292px;height:8px;border-radius:4px;background:#595b5d'></div><div class='a' style='left:378px;top:56px;width:1px;height:903px;background:#2b2b2b'></div><div class='a' style='left:53px;top:182px;width:292px;height:42px;border:3px solid #fd1c16'></div><div class='a' style='left:140px;top:440px;width:229px;height:225px;border:3px solid #fd1c16'></div><svg class='a' style='left:26px;top:179px' width='21' height='21'><circle cx='10.25' cy='10.1' r='9.2' stroke='#fb3535' stroke-width='1.8' fill='none'/><path d='M7.6 6.2 L10.6 4.6 V16.9' stroke='#fb3535' stroke-width='1.9' fill='none'/></svg><svg class='a' style='left:109px;top:439px' width='21' height='21'><circle cx='10.4' cy='10.2' r='9.2' stroke='#fb3535' stroke-width='1.8' fill='none'/><path d='M6.6 6.8 C6.8 4.4 8.6 3.6 10.3 3.6 C12.4 3.6 14 4.8 14 7 C14 9.6 10.6 12 6.5 15.6 H14.5' stroke='#fb3535' stroke-width='1.8' fill='none'/></svg><div class='a' style='left:379px;top:56px;width:1139px;height:27px;background:#3c3f41'></div><div class='a' style='left:379px;top:56px;width:127px;height:27px;background:#4e5254'></div><div class='a' style='left:379px;top:80px;width:127px;height:3px;background:#4a88c7'></div><svg class='a' style='left:388px;top:61px' width='16' height='16' viewBox='0 0 16 16'><circle cx='7' cy='7.3' r='7' fill='#3d8eb0'/><path d='M8.6 5.6 A2.6 2.6 0 1 0 8.6 9' stroke='#2b2b2b' stroke-width='1.2' fill='none'/><path d='M7.6 8.6 H15 L11.9 12.2 L15 15.8 H7.6 Z' fill='#c7a0f5'/><path d='M7 8 V16' stroke='#3d8eb0' stroke-width='0'/></svg><div class='t' style='left:407px;top:64px;font-size:12px;color:#bbbbbb'>MainActivity.kt</div><svg class='a' style='left:490px;top:65px' width='8' height='8'><path d='M0.5 0.5 L7.5 7.5 M7.5 0.5 L0.5 7.5' stroke='#7f7f7f' stroke-width='1'/></svg><div class='a' style='left:1504px;top:63px;width:3px;height:3px;border-radius:2px;background:#a9a9a9'></div><div class='a' style='left:1504px;top:68px;width:3px;height:3px;border-radius:2px;background:#a9a9a9'></div><div class='a' style='left:1504px;top:73px;width:3px;height:3px;border-radius:2px;background:#a9a9a9'></div><div class='a' style='left:379px;top:83px;width:1139px;height:876px;background:#2b2b2b'></div><div class='a' style='left:379px;top:83px;width:58px;height:876px;background:#313335'></div><div class='a' style='left:437px;top:83px;width:1px;height:876px;background:#555555'></div><div class='ln' style='top:84.5px;color:#606366'>1</div><div class='cl' style='top:84px'><span class='k'>package</span> com.ldcc.chamomileapp</div><div class='ln' style='top:106.5px;color:#606366'>2</div><div class='cl' style='top:106px'></div><div class='ln' style='top:128.5px;color:#606366'>3</div><div class='cl' style='top:128px'><span style='color:#8e8e8e'>import </span><span style='display:inline-block;height:21px;vertical-align:top;background:#3a3a3a;color:#8e8e8e'>...</span></div><div class='ln' style='top:150.5px;color:#606366'>20</div><div class='cl' style='top:150px'></div><div class='ln' style='top:172.5px;color:#606366'>21</div><div class='cl' style='top:172px'><span class='k'>class</span> MainActivity : AppCompatActivity() {</div><div class='ln' style='top:194.5px;color:#606366'>22</div><div class='cl' style='top:194px'>    <span class='k'>private lateinit var</span> <span class='pu'>flexCoreView</span>: View</div><div class='ln' style='top:216.5px;color:#606366'>23</div><div class='cl' style='top:216px'>    <span class='k'>private lateinit var</span> <span class='pu'>flexWebView</span>: FlexWebView</div><div class='ln' style='top:238.5px;color:#606366'>24</div><div class='cl' style='top:238px'></div><div class='ln' style='top:260.5px;color:#606366'>25</div><div class='cl' style='top:260px'>    <span class='k'>override fun</span> <span class='f'>onCreate</span>(savedInstanceState: Bundle?) <span style='display:inline-block;height:22px;background:#3b514d;color:#ffef28'>{</span></div><div class='ln' style='top:282.5px;color:#606366'>26</div><div class='cl' style='top:282px'>        <span class='k'>super</span>.onCreate(savedInstanceState)</div><div class='ln' style='top:304.5px;color:#606366'>27</div><div class='cl' style='top:304px'>        setContentView(R.layout.<span class='p i'>activity_real_main</span>)</div><div class='ln' style='top:326.5px;color:#606366'>28</div><div class='cl' style='top:326px'></div><div class='ln' style='top:348.5px;color:#606366'>29</div><div class='cl' style='top:348px'>        setFlexWebView() <span class='c'>// Setting FlexWebView</span></div><div class='a' style='left:438px;top:369px;width:1080px;height:22px;background:#323232'></div><div class='ln' style='top:370.5px;color:#a4a3a3'>30</div><div class='cl' style='top:370px'>    <span style='display:inline-block;height:22px;background:#3b514d;color:#ffef28'>}</span></div><div class='ln' style='top:392.5px;color:#606366'>31</div><div class='cl' style='top:392px'></div><div class='ln' style='top:414.5px;color:#606366'>32</div><div class='cl' style='top:414px'>    <span class='dc'>/** <svg class='hg' width='11' height='22' viewBox='-0.5 -4.7 11 22'><g stroke='currentColor' stroke-width='1.05' fill='none'><path d='M0.8 1.5 H5.8 C5.8 5 4.6 8 1.2 9.9 M8.6 0 V10.8'/></g></svg><svg class='hg' width='11' height='22' viewBox='-0.5 -4.7 11 22'><g stroke='currentColor' stroke-width='1.05' fill='none'><path d='M2 0.3 V4.6 H8 V0.3 M2 2.3 H8 M5 4.6 V6.6 M0.5 6.6 H9.5 M2 7.9 V10.3 H8.6'/></g></svg>, <svg class='hg' width='11' height='22' viewBox='-0.5 -4.7 11 22'><g stroke='currentColor' stroke-width='1.05' fill='none'><path d='M0.4 0.8 H6.2 M2 0.8 V4.6 M4.6 0.8 V4.6 M0.2 4.6 H6.4 M8.2 0 V6.4 M8.2 3 H9.9 M2 7 V10.4 H8.4 V7 M2 8.7 H8.4'/></g></svg><svg class='hg' width='11' height='22' viewBox='-0.5 -4.7 11 22'><g stroke='currentColor' stroke-width='1.05' fill='none'><circle cx='3.2' cy='3' r='2.3'/><path d='M8.4 0 V6.4 M6.2 3 H8.4 M2 7 V10.4 H8.4 V7 M2 8.7 H8.4'/></g></svg> <i>FlexView</i> <svg class='hg' width='11' height='22' viewBox='-0.5 -4.7 11 22'><g stroke='currentColor' stroke-width='1.05' fill='none'><path d='M3 0.5 C3 3 2 4.5 0.3 5.6 M3 2.5 C3.8 4 5 5 6 5.5 M8.4 0 V6 M6.4 2.8 H8.4 M2 7 H8.4 V8.6 H2 V10.3 H8.6'/></g></svg><svg class='hg' width='11' height='22' viewBox='-0.5 -4.7 11 22'><g stroke='currentColor' stroke-width='1.05' fill='none'><path d='M0.5 0.8 H5.8 M3.1 0.8 C3 3.5 1.8 5 0.3 5.8 M3.1 2.8 C4 4.4 5 5.2 6 5.6 M8.4 0 V6.6 M6.4 3 H8.4'/><ellipse cx='4.8' cy='8.9' rx='3.4' ry='1.7'/></g></svg> */</span></div><div class='ln' style='top:436.5px;color:#606366'>33</div><div class='cl' style='top:436px'>    <span class='k'>private fun</span> <span class='f'>setFlexWebView</span>() {</div><div class='ln' style='top:458.5px;color:#606366'>34</div><div class='cl' style='top:458px'>        <span class='pu'>flexCoreView</span> = findViewById(R.id.<span class='p i'>flex_view</span>)</div><div class='ln' style='top:480.5px;color:#606366'>35</div><div class='cl' style='top:480px'>        <span class='pu'>flexWebView</span> = <span class='pu'>flexCoreView</span>.findViewById(R.id.<span class='p i'>flex_web_view</span>)</div><div class='ln' style='top:502.5px;color:#606366'>36</div><div class='cl' style='top:502px'>        Utils.setFlexWebView(<span class='pu'>flexWebView</span>)  <span class='c'>// Utils<svg class='hg' width='11' height='22' viewBox='-0.5 -4.7 11 22'><g stroke='currentColor' stroke-width='1.05' fill='none'><ellipse cx='2.6' cy='5.3' rx='2.2' ry='2.9'/><path d='M6.6 0.4 V10.6 M9.2 0 V10.8 M5 5 H6.6'/></g></svg><svg class='hg' width='11' height='22' viewBox='-0.5 -4.7 11 22'><g stroke='currentColor' stroke-width='1.05' fill='none'><path d='M3.2 0.5 C3 5 2 8 0.2 10 M3.2 4.5 C3.8 7 4.8 8.5 6 9.6 M8.8 0 V10.8 M6.6 5 H8.8'/></g></svg> flexWebView <svg class='hg' width='11' height='22' viewBox='-0.5 -4.7 11 22'><g stroke='currentColor' stroke-width='1.05' fill='none'><path d='M3 0.5 C3 3 2 4.5 0.3 5.6 M3 2.5 C3.8 4 5 5 6 5.5 M8.4 0 V6 M6.4 2.8 H8.4 M2 7 H8.4 V8.6 H2 V10.3 H8.6'/></g></svg><svg class='hg' width='11' height='22' viewBox='-0.5 -4.7 11 22'><g stroke='currentColor' stroke-width='1.05' fill='none'><path d='M0.5 0.8 H5.8 M3.1 0.8 C3 3.5 1.8 5 0.3 5.8 M3.1 2.8 C4 4.4 5 5.2 6 5.6 M8.4 0 V6.6 M6.4 3 H8.4'/><ellipse cx='4.8' cy='8.9' rx='3.4' ry='1.7'/></g></svg></span></div><div class='ln' style='top:524.5px;color:#606366'>37</div><div class='cl' style='top:524px'></div><div class='ln' style='top:546.5px;color:#606366'>38</div><div class='cl' style='top:546px'>        ActivityProvider.<span class='pu'>mainActivity</span> = <span class='k'>this</span></div><div class='ln' style='top:568.5px;color:#606366'>39</div><div class='cl' style='top:568px'>        AndroidKeyStoreUtil.init(<span class='p i'>applicationContext</span>)</div><div class='ln' style='top:590.5px;color:#606366'>40</div><div class='cl' style='top:590px'>        <span class='p i'>window</span>.setSoftInputMode(WindowManager.LayoutParams.<span class='p i' style='text-decoration:line-through'>SOFT_INPUT_ADJUST_RESIZE</span>)</div><div class='ln' style='top:612.5px;color:#606366'>41</div><div class='cl' style='top:612px'>        setTheme(R.style.<span class='p i'>AppTheme</span>)</div><div class='ln' style='top:634.5px;color:#606366'>42</div><div class='cl' style='top:634px'></div><div class='ln' style='top:656.5px;color:#606366'>43</div><div class='cl' style='top:656px'>        <span class='k'>if</span> (<span class='hl'>Build.VERSION.<span class='p i'>SDK_INT</span> &gt;= Build.VERSION_CODES.<span class='p i'>KITKAT</span></span>) {</div><div class='ln' style='top:678.5px;color:#606366'>44</div><div class='cl' style='top:678px'>            WebView.setWebContentsDebuggingEnabled(<span class='k'>true</span>)</div><div class='ln' style='top:700.5px;color:#606366'>45</div><div class='cl' style='top:700px'>        }</div><div class='ln' style='top:722.5px;color:#606366'>46</div><div class='cl' style='top:722px'></div><div class='ln' style='top:744.5px;color:#606366'>47</div><div class='cl' style='top:744px'>        <span class='pu'>flexWebView</span>.<span class='f i'>apply</span> {</div><div class='ln' style='top:766.5px;color:#606366'>48</div><div class='cl' style='top:766px'>            <span class='pu'>baseUrl</span> = getString(R.string.<span class='p i'>base_url</span>)</div><div class='ln' style='top:788.5px;color:#606366'>49</div><div class='cl' style='top:788px'>            loadUrl(getString(R.string.<span class='p i'>url</span>))</div><div class='ln' style='top:810.5px;color:#606366'>50</div><div class='cl' style='top:810px'>            <span class='p i'>settings</span>.setSupportMultipleWindows(<span class='k'>true</span>)</div><div class='ln' style='top:832.5px;color:#606366'>51</div><div class='cl' style='top:832px'>            <span class='pu i'>webChromeClient</span> = BasicWebChromeClient(<span class='hint'>activity:</span><span class='k'>this</span><span class='lb'>@MainActivity</span>)</div><div class='ln' style='top:854.5px;color:#606366'>52</div><div class='cl' style='top:854px'>            <span class='pu i'>webViewClient</span> = BasicWebViewClient()</div><div class='ln' style='top:876.5px;color:#606366'>53</div><div class='cl' style='top:876px'>            <span class='pu i'>isVerticalScrollBarEnabled</span> = <span class='k'>false</span></div><div class='ln' style='top:898.5px;color:#606366'>54</div><div class='cl' style='top:898px'>            <span class='pu i'>isHorizontalScrollBarEnabled</span> = <span class='k'>false</span></div><div class='ln' style='top:920.5px;color:#606366'>55</div><div class='cl' style='top:920px'>            <span class='hl'><span class='p i'>settings</span>.<span class='pu i'>javaScriptEnabled</span> = <span class='k'>true</span></span></div><div class='ln' style='top:942.5px;color:#606366'>56</div><div class='cl' style='top:942px'>            addJavascriptInterface(WebAppInterface(), <span class='hint'>name:</span><span class='s'>"AppVersionCheckInterface"</span>)</div><svg class='a' style='left:0;top:0' width='1537' height='996'><path d='M811.5 521.5 L813.5 518.6 L815.5 521 L817.5 518.6 L819.5 521 L821.5 518.6 L823.5 521 L825.5 518.6 L827.5 521 L829.5 518.6 L831.5 521 L833.5 518.6 L835.5 521 L837.5 518.6 L839.5 521 L841.5 518.6 L843.5 521 L845.5 518.6 L847.5 521 L849.5 518.6 L851.5 521 L853.5 518.6 L855.5 521 L857.5 518.6 L859.5 521 L861.5 518.6 L863.5 521 L865.5 518.6 L867.5 521 L869.5 518.6 L871.5 521 L873.5 518.6' stroke='#5a9a5a' stroke-width='0.9' fill='none'/></svg><div class='a' style='left:1243px;top:83px;width:1px;height:876px;background:#464646'></div><div class='a' style='left:483px;top:371px;width:2px;height:18px;background:#bbbbbb'></div><svg class='a' style='left:405px;top:174px' width='18' height='18'><path d='M4 0 H13 V8 H1 V3 Z' fill='#87939a'/><rect x='0' y='9' width='17' height='8' fill='#c0622d'/><path d='M6 10.5 L3.5 13 L6 15.5 M11 10.5 L13.5 13 L11 15.5' stroke='#2b2b2b' stroke-width='1.1' fill='none'/></svg><svg class='a' style='left:407px;top:262px' width='16' height='16'><circle cx='5.5' cy='8' r='4.3' stroke='#3e9cc9' stroke-width='2' fill='none'/><circle cx='5.5' cy='8' r='1.2' fill='#3e9cc9'/><path d='M12 15 V3' stroke='#c75450' stroke-width='1.6'/><path d='M9 5 L12 1 L15 5 Z' fill='#c75450'/></svg><div class='a' style='left:427px;top:259px;width:2px;height:132px;background:#4a7a6e'></div><svg class='a' style='left:432px;top:134px' width='11' height='11'><rect x='0.5' y='0.5' width='9' height='9' fill='#313335' stroke='#6d6d6d'/><path d='M2.5 5H7.5 M5 2.5V7.5' stroke='#8a8a8a'/></svg><svg class='a' style='left:432px;top:178px' width='11' height='13'><path d='M0.5 0.5 H9.5 V7 L5 11.5 L0.5 7 Z' fill='#2b2b2b' stroke='#6d6d6d'/><path d='M2.5 4.5 H7.5' stroke='#8a8a8a'/></svg><svg class='a' style='left:432px;top:266px' width='11' height='13'><path d='M0.5 0.5 H9.5 V7 L5 11.5 L0.5 7 Z' fill='#2b2b2b' stroke='#6d6d6d'/><path d='M2.5 4.5 H7.5' stroke='#8a8a8a'/></svg><svg class='a' style='left:432px;top:442px' width='11' height='13'><path d='M0.5 0.5 H9.5 V7 L5 11.5 L0.5 7 Z' fill='#2b2b2b' stroke='#6d6d6d'/><path d='M2.5 4.5 H7.5' stroke='#8a8a8a'/></svg><svg class='a' style='left:432px;top:662px' width='11' height='13'><path d='M0.5 0.5 H9.5 V7 L5 11.5 L0.5 7 Z' fill='#2b2b2b' stroke='#6d6d6d'/><path d='M2.5 4.5 H7.5' stroke='#8a8a8a'/></svg><svg class='a' style='left:432px;top:750px' width='11' height='13'><path d='M0.5 0.5 H9.5 V7 L5 11.5 L0.5 7 Z' fill='#2b2b2b' stroke='#6d6d6d'/><path d='M2.5 4.5 H7.5' stroke='#8a8a8a'/></svg><svg class='a' style='left:432px;top:371px' width='11' height='13'><path d='M0.5 12.5 H9.5 V6 L5 1.5 L0.5 6 Z' fill='#2b2b2b' stroke='#6d6d6d'/><path d='M2.5 8.5 H7.5' stroke='#8a8a8a'/></svg><svg class='a' style='left:432px;top:701px' width='11' height='13'><path d='M0.5 12.5 H9.5 V6 L5 1.5 L0.5 6 Z' fill='#2b2b2b' stroke='#6d6d6d'/><path d='M2.5 8.5 H7.5' stroke='#8a8a8a'/></svg><div class='a' style='left:473px;top:281px;width:1px;height:88px;background:#393939'></div><div class='a' style='left:473px;top:457px;width:1px;height:506px;background:#393939'></div><div class='a' style='left:505px;top:677px;width:1px;height:22px;background:#393939'></div><div class='a' style='left:505px;top:765px;width:1px;height:198px;background:#393939'></div><svg class='a' style='left:1419px;top:89px' width='13' height='12'><path d='M6.5 0.5 L12.5 11.5 H0.5 Z' fill='#e3a41b'/><path d='M6.5 4 V8' stroke='#2b2b2b' stroke-width='1.4'/><rect x='5.8' y='9' width='1.4' height='1.4' fill='#2b2b2b'/></svg><div class='t' style='left:1434px;top:90px;font-size:12px;color:#a9a9a9'>7</div><svg class='a' style='left:1448px;top:90px' width='13' height='14'><path d='M1 4.8 L4.6 8 L11.3 1' stroke='#4fa35a' stroke-width='2.6' fill='none'/><path d='M0.5 12.5 L2.5 10.6 L4.5 12.5 L6.5 10.6 L8.5 12.5 L10.5 10.6' stroke='#4fa35a' stroke-width='1' fill='none'/></svg><div class='t' style='left:1463px;top:90px;font-size:12px;color:#a9a9a9'>3</div><svg class='a' style='left:1480.5px;top:92.5px' width='10' height='6'><path d='M0.8 5.2 L5 1.2 L9.2 5.2' stroke='#b0b0b0' stroke-width='1.5' fill='none'/></svg><svg class='a' style='left:1501.5px;top:93.5px' width='10' height='6'><path d='M0.8 0.8 L5 4.8 L9.2 0.8' stroke='#b0b0b0' stroke-width='1.5' fill='none'/></svg><div class='a' style='left:1507px;top:111px;width:8px;height:569px;border-radius:4px;background:#4d4d4d'></div><div class='a' style='left:1504px;top:440px;width:14px;height:2px;background:#c89b2c'></div><div class='a' style='left:1504px;top:484px;width:14px;height:2px;background:#c89b2c'></div><div class='a' style='left:1504px;top:656px;width:14px;height:2px;background:#c89b2c'></div><div class='a' style='left:1518px;top:56px;width:19px;height:903px;background:#3c3f41'></div><div class='a' style='left:1518px;top:56px;width:1px;height:903px;background:#323232'></div><svg class='a' style='left:1522px;top:67px' width='12' height='14'><rect x='0.7' y='0.7' width='7' height='10' stroke='#a9a9a9' stroke-width='1.2' fill='none'/><path d='M5 13.5 A4 4 0 0 1 12 13.5 Z' fill='#a9a9a9'/></svg><div class='vt' style='left:1535.5px;top:85px;transform:rotate(90deg);font-size:11.5px;letter-spacing:0px'>Device Manager</div><svg class='a' style='left:1521px;top:191px' width='14' height='14'><path d='M2 11 H11 L10 9 V6 A3.5 3.5 0 0 0 3 6 V9 Z' fill='#a9a9a9'/><circle cx='6.5' cy='12.5' r='1.3' fill='#a9a9a9'/><circle cx='11.5' cy='2.5' r='2.3' fill='#3592c4'/></svg><div class='vt' style='left:1535.5px;top:208px;transform:rotate(90deg);font-size:11.5px;letter-spacing:0.3px'>Notifications</div><svg class='a' style='left:1522px;top:303px' width='12' height='14'><path d='M2 3 A5 5 0 0 1 10 3 M2 11 A5 5 0 0 0 10 11 M6 4 V10' stroke='#a9a9a9' stroke-width='1.4' fill='none'/></svg><div class='vt' style='left:1535.5px;top:320px;transform:rotate(90deg);font-size:11.5px;letter-spacing:0px'>App Links Assistant</div><svg class='a' style='left:1521px;top:443px' width='14' height='13' viewBox='0 0 16 16'><path d='M0.5 14 C0.5 8 3 5.5 7 5.5 C9 3 12 2.5 14.5 4 L15.5 6.5 L12.5 6 L12.5 13 L10.5 13 L10.5 10.5 L6 10.5 L6 13.5 L3.5 13.5 L3.5 11.5 Z' fill='#a9a9a9'/></svg><div class='vt' style='left:1535.5px;top:460px;transform:rotate(90deg);font-size:11.5px;letter-spacing:0px'>Gradle</div><svg class='a' style='left:1523px;top:721px' width='11' height='14'><rect x='0.7' y='0.7' width='9' height='12' rx='1' stroke='#a9a9a9' stroke-width='1.2' fill='none'/><path d='M1 10 H10' stroke='#a9a9a9'/></svg><div class='vt' style='left:1535.5px;top:739px;transform:rotate(90deg);font-size:11.5px;letter-spacing:0px'>Device Explorer</div><svg class='a' style='left:1522px;top:845px' width='13' height='12'><rect x='0.7' y='0.7' width='8' height='10' stroke='#a9a9a9' stroke-width='1.2' fill='none'/><rect x='7' y='5' width='5' height='6' fill='#3c3f41' stroke='#a9a9a9'/></svg><div class='vt' style='left:1535.5px;top:862px;transform:rotate(90deg);font-size:11.5px;letter-spacing:0px'>Running Devices</div><div class='a' style='left:0;top:959px;width:1537px;height:1px;background:#323232'></div><div class='a' style='left:0;top:960px;width:1537px;height:21px;background:#3c3f41'></div><div class='t' style='left:49px;top:964px;font-size:11.7px;color:#bbbbbb'>Version Control</div><div class='t' style='left:168px;top:964px;font-size:11.7px;color:#bbbbbb'>Profiler</div><div class='t' style='left:245px;top:964px;font-size:11.7px;color:#bbbbbb'>App Quality Insights</div><div class='t' style='left:393px;top:964px;font-size:11.7px;color:#bbbbbb'>Logcat</div><div class='t' style='left:465px;top:964px;font-size:11.7px;color:#bbbbbb'>TODO</div><div class='t' style='left:536px;top:964px;font-size:11.7px;color:#bbbbbb'>Problems</div><div class='t' style='left:624px;top:964px;font-size:11.7px;color:#bbbbbb'>Terminal</div><div class='t' style='left:706px;top:964px;font-size:11.7px;color:#bbbbbb'>Services</div><div class='t' style='left:790px;top:964px;font-size:11.7px;color:#bbbbbb'>App Inspection</div><div class='t' style='left:1419px;top:964px;font-size:11.7px;color:#bbbbbb'>Layout Inspector</div><svg class='a' style='left:34px;top:963px' width='10' height='15'><path d='M2.5 2 V12.5 M2.5 10.5 C2.5 7 7.5 7.5 7.5 3.5' stroke='#b0b0b0' stroke-width='1.5' fill='none'/><circle cx='2.5' cy='2' r='1.5' fill='#b0b0b0'/><circle cx='2.5' cy='12.8' r='1.5' fill='#b0b0b0'/><circle cx='7.5' cy='2.6' r='1.5' fill='#b0b0b0'/></svg><svg class='a' style='left:151px;top:965px' width='14' height='10'><path d='M1 9 A6 6 0 0 1 13 9' stroke='#a9a9a9' stroke-width='1.8' fill='none'/><path d='M7 9 L9 3.5' stroke='#a9a9a9' stroke-width='1.5'/></svg><svg class='a' style='left:229px;top:963px' width='14' height='13'><path d='M3 1 H11 L13.5 4.5 L7 12.5 L0.5 4.5 Z M0.5 4.5 H13.5 M5 1 L7 12 L9 1' stroke='#a9a9a9' stroke-width='1' fill='none'/></svg><svg class='a' style='left:377px;top:965px' width='12' height='10'><path d='M0 1.2H11 M0 4.7H6 M0 8.2H9' stroke='#a9a9a9' stroke-width='1.8'/></svg><svg class='a' style='left:450px;top:964px' width='12' height='11'><path d='M0 1.5H2 M4 1.5H12 M0 5.5H2 M4 5.5H12 M0 9.5H2 M4 9.5H12' stroke='#a9a9a9' stroke-width='1.4'/></svg><svg class='a' style='left:520px;top:964px' width='12' height='12'><circle cx='6' cy='6' r='5.5' fill='#a9a9a9'/><path d='M6 2.5V6.5' stroke='#3c3f41' stroke-width='1.5'/><circle cx='6' cy='8.7' r='0.9' fill='#3c3f41'/></svg><svg class='a' style='left:608px;top:964px' width='12' height='11'><rect x='0' y='0' width='12' height='11' fill='#a9a9a9'/><path d='M2 2.5 L5 5 L2 7.5 M6 8.5 H10' stroke='#3c3f41' stroke-width='1.2' fill='none'/></svg><svg class='a' style='left:689px;top:963px' width='13' height='13'><path d='M3.5 0.5 H9.5 L12.5 6.5 L9.5 12.5 H3.5 L0.5 6.5 Z' fill='#a9a9a9'/><path d='M5 4 L9 6.5 L5 9 Z' fill='#3c3f41'/></svg><svg class='a' style='left:774px;top:963px' width='12' height='14'><path d='M3 1 H9 V4 H11 V8 H9 V13 H3 V8 H1 V4 H3 Z' fill='#a9a9a9'/></svg><svg class='a' style='left:1402px;top:963px' width='14' height='13'><rect x='0.5' y='0.5' width='10' height='8' stroke='#a9a9a9' fill='none'/><rect x='2.5' y='2.5' width='10' height='8' stroke='#a9a9a9' fill='#3c3f41'/><circle cx='9' cy='8' r='2.5' stroke='#a9a9a9' fill='#3c3f41'/><path d='M11 10 L13.5 12.5' stroke='#a9a9a9' stroke-width='1.3'/></svg><div class='a' style='left:0;top:980px;width:1537px;height:1px;background:#4a4949'></div><div class='a' style='left:0;top:981px;width:1537px;height:15px;background:#3c3f41'></div><svg class='a' style='left:10px;top:984px' width='14' height='12'><path d='M1 3 V12' stroke='#a9a9a9'/><rect x='3.5' y='1.5' width='9' height='9' stroke='#a9a9a9' fill='none'/></svg><div class='t' style='left:42px;top:985px;font-size:11.75px;color:#bbbbbb'>Project update recommended: Android Gradle plugin version 7.1.0 has an upgrade available.  Start the AGP Upgrade Assistant to update this project's AGP version. // Start AGP Upgrade Assistant // Remind me tomorrow // D... (13 minutes ago)</div><div class='a' style='left:1295px;top:981px;width:242px;height:15px;background:#3c3f41'></div><div class='t' style='left:1327px;top:985px;font-size:11.6px;color:#bbbbbb'>30:6</div><div class='t' style='left:1363px;top:985px;font-size:11.6px;color:#bbbbbb'>LF</div><div class='t' style='left:1387px;top:985px;font-size:11.6px;color:#bbbbbb'>UTF-8</div><svg class='a' style='left:1432px;top:984px' width='13' height='12'><path d='M0 0 H12 V9 H6 L3 12 V9 H0 Z' fill='#a9a9a9'/><path d='M6 2 V5.5' stroke='#3c3f41' stroke-width='1.4'/><rect x='5.3' y='6.5' width='1.4' height='1.4' fill='#3c3f41'/></svg><div class='t' style='left:1456px;top:985px;font-size:11.6px;color:#bbbbbb'>4 spaces</div><svg class='a' style='left:1514px;top:983px' width='12' height='13'><path d='M2 5 V3 A3 3 0 0 1 8 3' stroke='#a9a9a9' stroke-width='1.4' fill='none'/><rect x='3' y='6' width='8' height='7' fill='#a9a9a9'/></svg></div></body></html>
